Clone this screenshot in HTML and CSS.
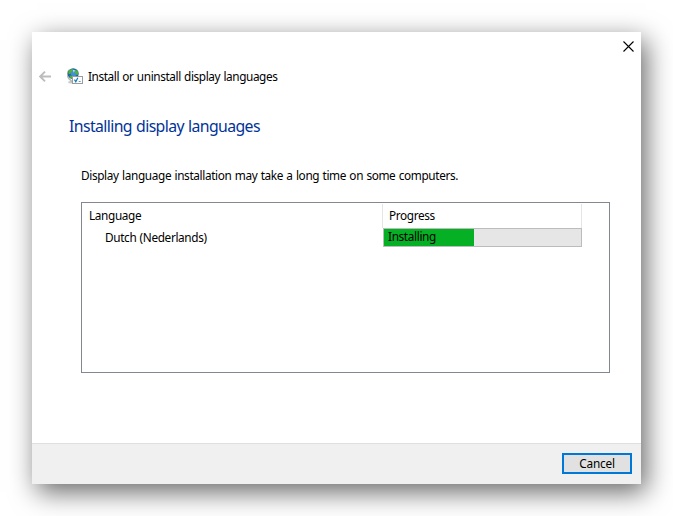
FILE: index.html
```html
<!DOCTYPE html>
<html lang="en">
<head>
<meta charset="utf-8">
<title>Install or uninstall display languages</title>
<link rel="stylesheet" href="styles.css">
</head>
<body>
<main class="dialog">
  <div class="titlebar">
    <svg class="close" width="11" height="11" viewBox="0 0 11 11"><path d="M.5 .5l10 10M10.500 .5l-10 10"/></svg>
  </div>
  <header class="header">
    <svg class="back" width="12" height="11" viewBox="0 0 12 11"><path d="M6 .7L1.200 5.500 6 10.300M1.300 5.500H12"/></svg>
    <svg class="globe" width="16" height="16" viewBox="0 0 16 16">
      <ellipse cx="4" cy="14.300" rx="3" ry="1.200" fill="#ccc"/>
      <path d="M2.200 2C-.5 5-.2 10 4 12.500L5 14" fill="none" stroke="#b5b8b2" stroke-width="1.500"/>
      <circle cx="6.200" cy="5.700" r="5.500" fill="#1764ad"/>
      <circle cx="6.800" cy="5" r="3.200" fill="#438fd8"/>
      <path d="M1.200 4.200C2 1.800 4 .7 6 1L5.400 3 3.800 4.200 3.500 6.200 1.800 6zM8.200 1.500L11 3.500 11.200 7 8.500 6 8 4zM2.500 7.500L6 8 5.500 11 3.500 10.200z" fill="#52b52c"/>
      <path d="M6 1.800l1.800.5L6.800 4.700z" fill="#d4efff"/>
      <rect x="5.500" y="8.500" width="10" height="7" fill="#fafcfd" stroke="#9a9da0"/>
      <path d="M7.500 11.700l1.300 2 2-4" fill="none" stroke="#147ab5" stroke-width="1.200"/>
      <path d="M11.700 13.500h2" stroke="#729eb6"/>
    </svg>
    <span class="caption">Install or uninstall display languages</span>
  </header>
  <section class="content">
    <h1 class="heading">Installing display languages</h1>
    <p class="note">Display language installation may take a long time on some computers.</p>
    <div class="list">
      <div class="row head">
        <span class="lang-head">Language</span>
        <span class="progress-head">Progress</span>
      </div>
      <div class="row">
        <span class="lang">Dutch (Nederlands)</span>
        <div class="progress"><div class="bar"><span class="status">Installing</span></div></div>
      </div>
    </div>
  </section>
  <footer class="footer"><button class="cancel">Cancel</button></footer>
</main>
</body>
</html>
```
FILE: styles.css
```css
* { box-sizing: border-box; }
body {
  margin: 0;
  padding: 32px;
  height: 516px;
  overflow: hidden;
  background: #fff;
  color: #000;
  font: 11.8px/15px "Noto Sans", "Open Sans", sans-serif;
  letter-spacing: -0.36px;
  word-spacing: 0.6px;
}
.dialog {
  display: flex;
  flex-direction: column;
  width: 609px;
  height: 452px;
  background: #fff;
  box-shadow: 5px 8px 25px rgba(0, 0, 0, .6);
}
.titlebar {
  display: flex;
  justify-content: flex-end;
  height: 32px;
  padding: 9px 7px 0 0;
}
.close { stroke: #000; stroke-width: 1.100; }
.header {
  display: flex;
  align-items: center;
  height: 25px;
  padding-left: 7px;
}
.back { margin-bottom: 1px; fill: none; stroke: #bdbdbd; stroke-width: 1.900; }
.globe { margin: 0 0 1px 16px; }
.caption { margin-left: 5px; letter-spacing: -0.4px; }
.content { flex: 1; padding: 26px 31px 0 37px; }
.heading {
  margin: 0;
  color: #039;
  font-size: 15.8px;
  font-weight: 400;
  line-height: 22px;
  letter-spacing: -0.6px;
}
.note { margin: 31px 0 0 12px; }
.list {
  height: 171px;
  margin: 19px 0 0 12px;
  border: 1px solid #828790;
}
.row { display: flex; height: 19px; }
.head { height: 25px; padding-top: 1px; }
.lang-head { width: 300px; padding: 4px 0 0 7px; }
.progress-head {
  width: 200px;
  padding: 4px 0 0 6px;
  border: solid #e5e5e5;
  border-width: 0 1px;
}
.lang { width: 301px; padding: 2px 0 0 23px; }
.progress {
  width: 199px;
  height: 19px;
  border: 1px solid #bcbcbc;
  background: #e6e6e6;
}
.bar { width: 90px; height: 17px; background: #06b025; }
.status { display: block; padding-left: 4px; }
.footer {
  display: flex;
  justify-content: flex-end;
  height: 41px;
  padding: 9px 9px 0 0;
  border-top: 1px solid #dfdfdf;
  background: #f0f0f0;
}
.cancel {
  width: 70px;
  height: 21px;
  padding: 0;
  border: 2px solid #0078d7;
  background: #e1e1e1;
  color: #000;
  font: inherit;
  letter-spacing: -0.2px;
}
```
